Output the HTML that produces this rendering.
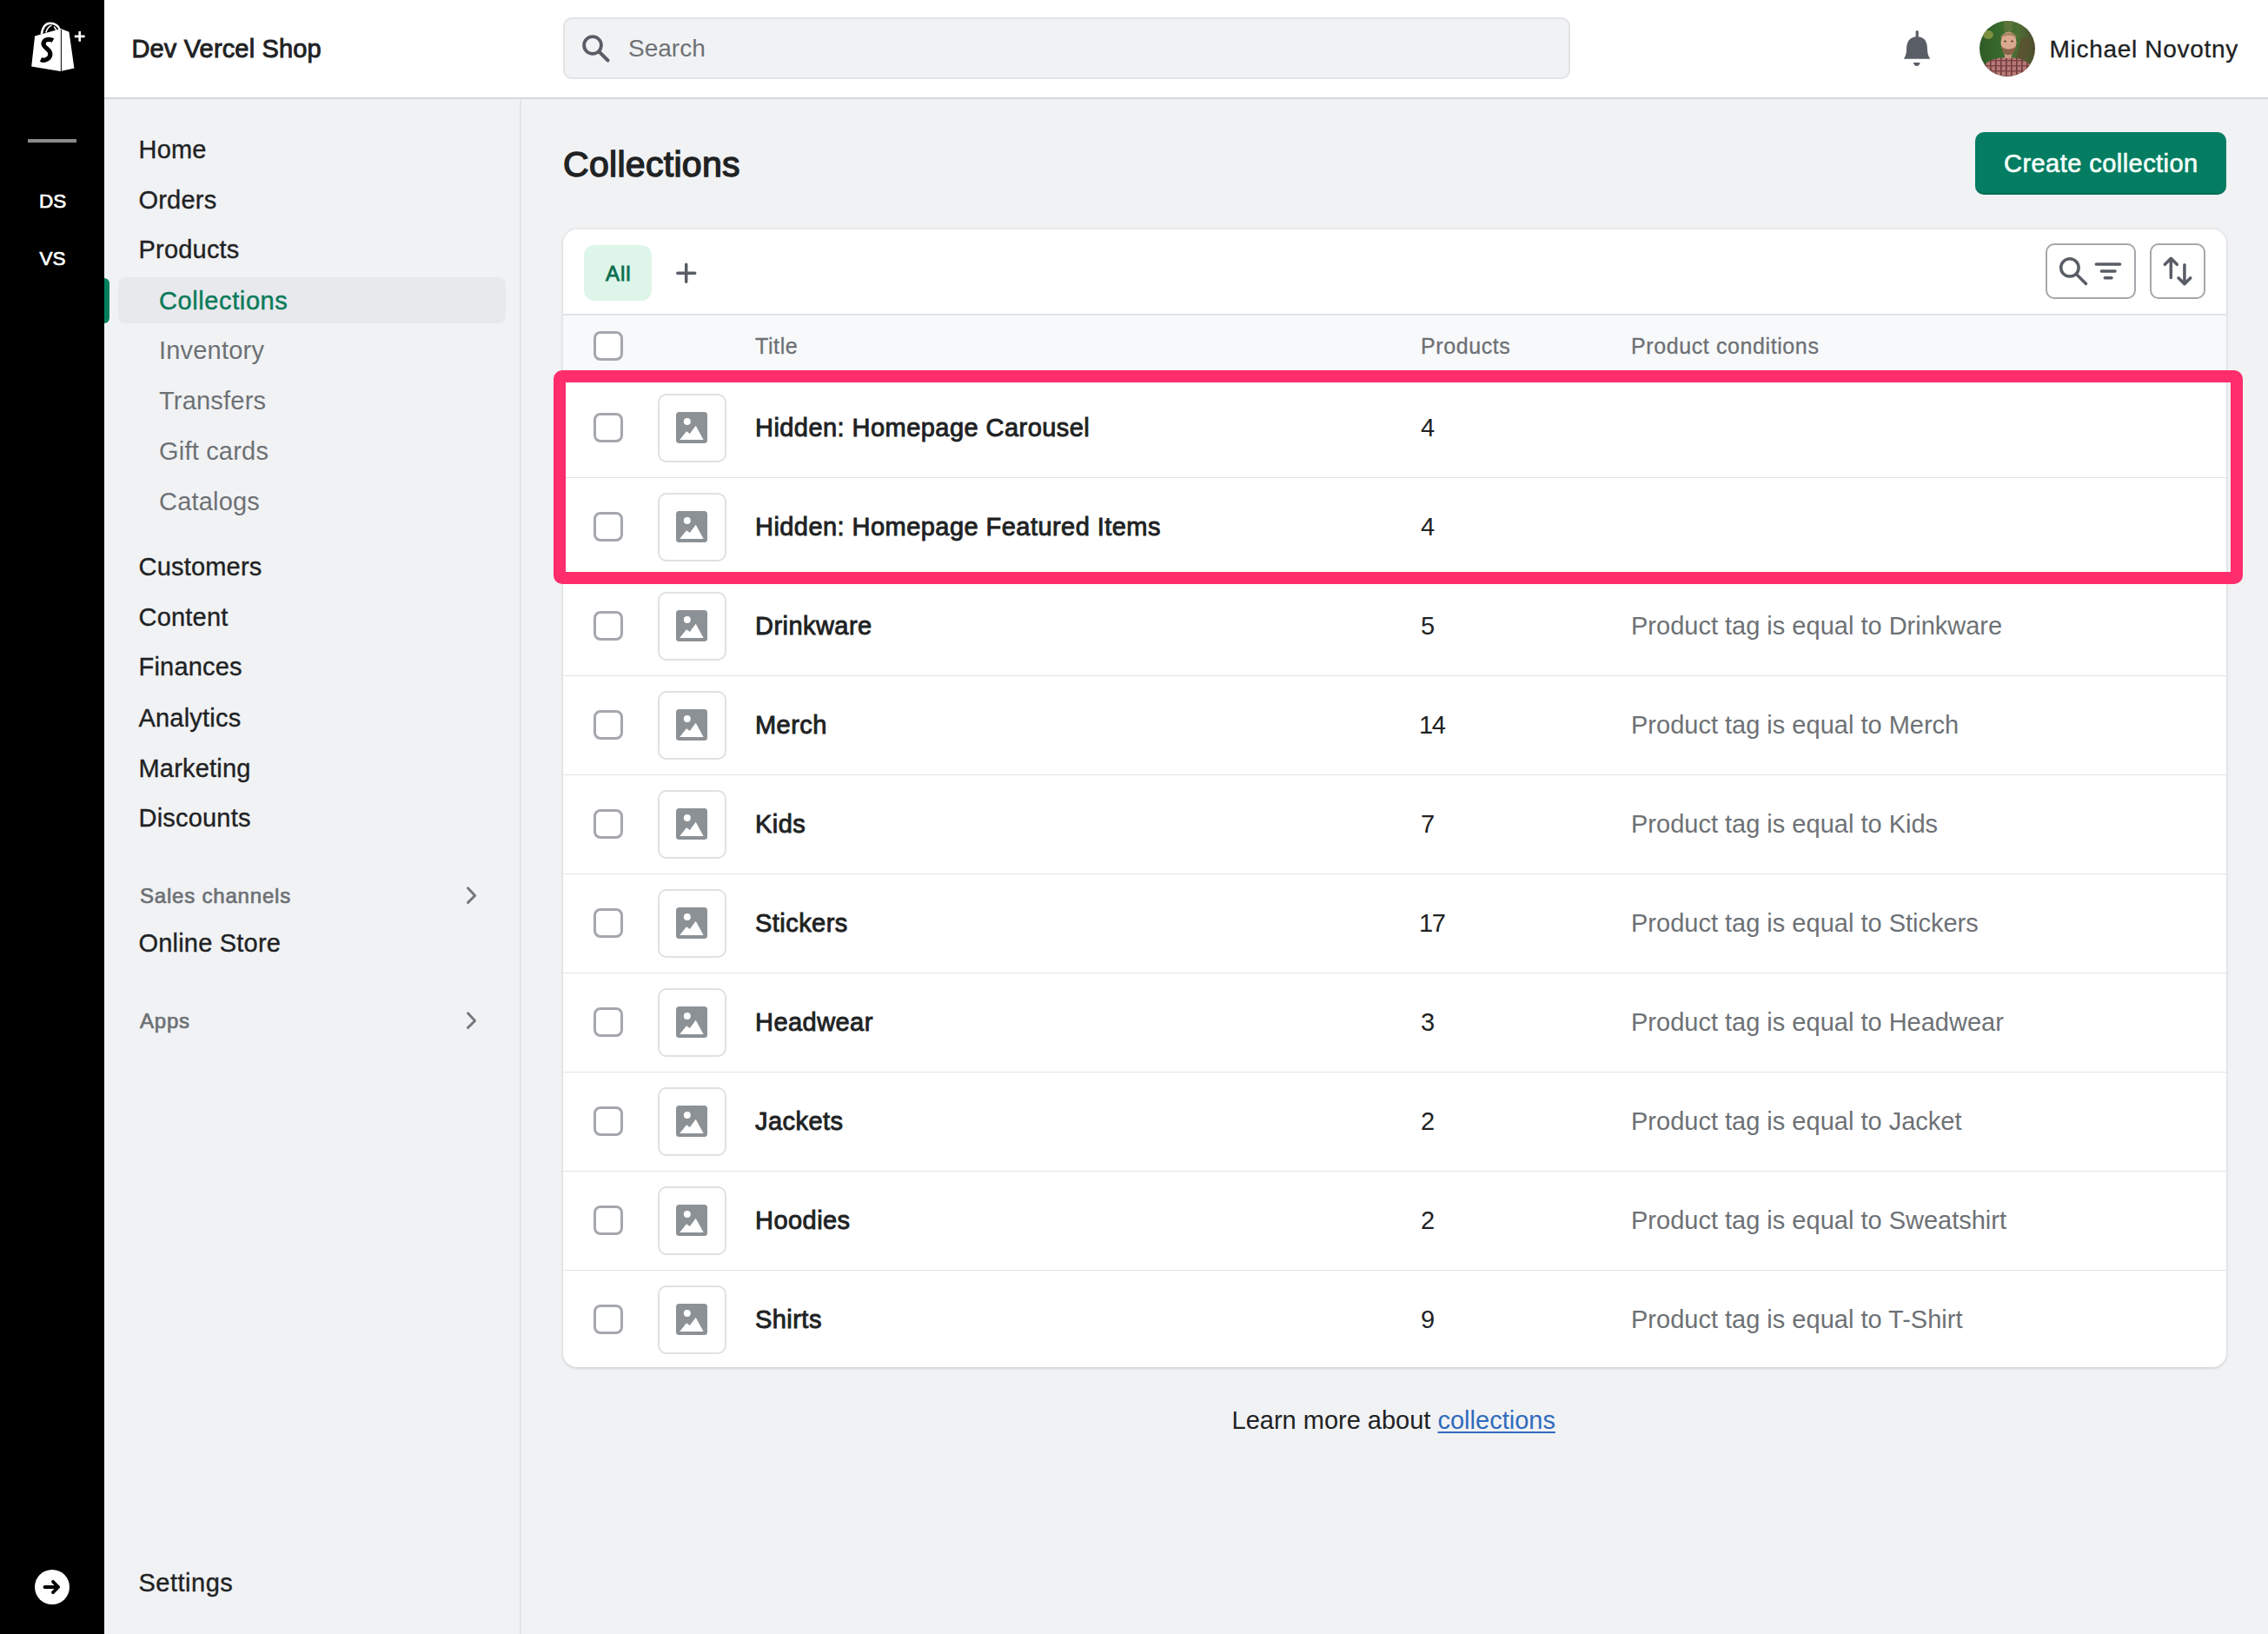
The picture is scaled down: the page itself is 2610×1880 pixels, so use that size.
<!DOCTYPE html>
<html><head><meta charset="utf-8"><style>
html,body{margin:0;padding:0}
body{width:2610px;height:1880px;position:relative;overflow:hidden;background:#f1f2f4;font-family:"Liberation Sans",sans-serif}
.t{position:absolute;white-space:nowrap}
</style></head><body>
<div style="position:absolute;left:0;top:0;width:120px;height:1880px;background:#000"></div>
<svg style="position:absolute;left:0;top:0" width="120" height="100" viewBox="0 0 120 100">
<path d="M40.1 41.4 L70 33.1 L79.5 36.8 L85.4 78.4 L69.5 82.1 L36.2 76.5 Z" fill="#fff"/>
<path d="M47.8 39.5 C49 31 53 26.8 58 26.8 C63 26.8 67 29.5 69 34.5" fill="none" stroke="#fff" stroke-width="2.6"/>
<path d="M52.8 37.5 C54.3 32.5 56.5 29.8 59.5 29.2" fill="none" stroke="#fff" stroke-width="1.6"/>
<path d="M62.2 30.6 L65.2 35" fill="none" stroke="#fff" stroke-width="1.5"/>
<line x1="70.4" y1="34" x2="70.4" y2="82" stroke="#000" stroke-width="1"/>
<path d="M61 46.6 C57.5 44.6 50.8 44.6 50 50 C49.3 54.3 56.3 56 57.6 60.6 C59 66.3 52.5 71.2 47 68.4" fill="none" stroke="#000" stroke-width="5.2"/>
<path d="M91.7 36 V47.8 M85.8 41.9 H97.6" stroke="#fff" stroke-width="2.6"/>
</svg>
<div style="position:absolute;left:32px;top:160px;width:56px;height:4px;background:#8a8a8a"></div>
<div class="t" style="left:45px;top:221.25px;font-size:22.5px;line-height:22.5px;color:#fff;font-weight:400;letter-spacing:0px;-webkit-text-stroke:0.7px #fff">DS</div>
<div class="t" style="left:45.5px;top:287.45px;font-size:22.5px;line-height:22.5px;color:#fff;font-weight:400;letter-spacing:0px;-webkit-text-stroke:0.7px #fff">VS</div>
<svg style="position:absolute;left:40px;top:1806px" width="40" height="40" viewBox="0 0 40 40">
<circle cx="20" cy="20" r="20" fill="#fff"/>
<path d="M11.5 20 H27 M21 13.8 L27.2 20 L21 26.2" fill="none" stroke="#000" stroke-width="3.8" stroke-linecap="round" stroke-linejoin="round"/>
</svg>
<div style="position:absolute;left:120px;top:0;width:2490px;height:112px;background:#fff;border-bottom:2px solid #d5d7da"></div>
<div class="t" style="left:151.5px;top:42.45px;font-size:29px;line-height:29px;color:#202223;font-weight:400;letter-spacing:0.15px;-webkit-text-stroke:0.9px #202223">Dev Vercel Shop</div>
<div style="position:absolute;left:648px;top:20px;width:1155px;height:67px;background:#f1f2f4;border:2px solid #e1e3e5;border-radius:10px"></div>
<svg style="position:absolute;left:660px;top:30px" width="50" height="50" viewBox="660 30 50 50">
<circle cx="682" cy="52" r="9.9" fill="none" stroke="#585d66" stroke-width="3.8"/>
<path d="M689.5 59.5 L699.5 69.5" stroke="#585d66" stroke-width="4" stroke-linecap="round"/>
</svg>
<div class="t" style="left:723px;top:42.30px;font-size:28px;line-height:28px;color:#6d7175;font-weight:400;letter-spacing:0px;">Search</div>
<svg style="position:absolute;left:2180px;top:30px" width="50" height="50" viewBox="2180 30 50 50">
<path d="M2206.2 36.5 V43" stroke="#585d66" stroke-width="3.2" stroke-linecap="round"/>
<path d="M2206.2 42.3 C2197 42.3 2194 49 2194 57 C2194 62 2192.5 65 2190.8 67.8 L2221.3 67.8 C2219.5 65 2218 62 2218 57 C2218 49 2215.5 42.3 2206.2 42.3 Z" fill="#585d66"/>
<path d="M2201.8 72 H2209.7 C2209 74.5 2207.5 75.9 2205.7 75.9 C2204 75.9 2202.5 74.5 2201.8 72 Z" fill="#585d66"/>
</svg>
<svg style="position:absolute;left:2278px;top:24px" width="64" height="64" viewBox="0 0 64 64">
<defs><clipPath id="av"><circle cx="32" cy="32" r="32"/></clipPath>
<linearGradient id="bgg" x1="0" y1="0" x2="1" y2="0"><stop offset="0" stop-color="#2f5a26"/><stop offset="0.45" stop-color="#3a6e2e"/><stop offset="0.7" stop-color="#4d6e34"/><stop offset="1" stop-color="#4e4a2e"/></linearGradient>
<pattern id="plaid" width="6" height="6" patternUnits="userSpaceOnUse"><rect width="6" height="6" fill="#b87878"/><rect x="0" y="0" width="1.6" height="6" fill="#6e3a3a"/><rect x="0" y="3" width="6" height="1.4" fill="#7a4444"/></pattern>
</defs>
<g clip-path="url(#av)">
<rect width="64" height="64" fill="url(#bgg)"/>
<ellipse cx="10" cy="16" rx="6" ry="5" fill="#9aa248" opacity="0.7"/>
<rect x="44" y="20" width="12" height="30" fill="#5c4e30" opacity="0.7" transform="rotate(15 50 35)"/>
<rect x="28" y="0" width="10" height="12" fill="#7b7a4a" opacity="0.5"/>
<path d="M0 64 C2 49 12 42.5 32 42 C52 42.5 62 49 64 64 Z" fill="url(#plaid)"/>
<path d="M28 36 L38 36 L36.5 43 L29.5 43 Z" fill="#c79a82"/>
<ellipse cx="33.5" cy="25" rx="9" ry="12.5" fill="#d9aa90"/>
<path d="M24.5 20 C25 12 42 11 42.5 20 C39 15.5 28 15.5 24.5 20 Z" fill="#a68660"/>
<path d="M25 28 C26 38 30 39 33.5 39 C37 39 41 38 42 28 C40 34 27 34 25 28 Z" fill="#8a6448"/>
<ellipse cx="29.5" cy="23.5" rx="1.4" ry="0.9" fill="#5a3a2a"/><ellipse cx="37.5" cy="23.5" rx="1.4" ry="0.9" fill="#5a3a2a"/>
</g></svg>
<div class="t" style="left:2358.5px;top:43.30px;font-size:28px;line-height:28px;color:#202223;font-weight:400;letter-spacing:0.7px;-webkit-text-stroke:0.3px #202223">Michael Novotny</div>
<div style="position:absolute;left:598px;top:113px;width:2px;height:1767px;background:#e3e4e6"></div>
<div style="position:absolute;left:136px;top:319px;width:446px;height:53px;background:#e8e9ed;border-radius:8px"></div>
<div style="position:absolute;left:120px;top:320px;width:6px;height:52px;background:#007f5f;border-radius:0 6px 6px 0"></div>
<div class="t" style="left:159.5px;top:157.95px;font-size:29px;line-height:29px;color:#202223;font-weight:400;letter-spacing:0.2px;-webkit-text-stroke:0.35px #202223">Home</div>
<div class="t" style="left:159.5px;top:215.95px;font-size:29px;line-height:29px;color:#202223;font-weight:400;letter-spacing:0.2px;-webkit-text-stroke:0.35px #202223">Orders</div>
<div class="t" style="left:159.5px;top:273.45px;font-size:29px;line-height:29px;color:#202223;font-weight:400;letter-spacing:0.2px;-webkit-text-stroke:0.35px #202223">Products</div>
<div class="t" style="left:183px;top:332.45px;font-size:29px;line-height:29px;color:#0b7a5a;font-weight:400;letter-spacing:0.6px;-webkit-text-stroke:0.45px #0b7a5a">Collections</div>
<div class="t" style="left:183px;top:389.45px;font-size:29px;line-height:29px;color:#6d7175;font-weight:400;letter-spacing:0.2px;">Inventory</div>
<div class="t" style="left:183px;top:447.45px;font-size:29px;line-height:29px;color:#6d7175;font-weight:400;letter-spacing:0.2px;">Transfers</div>
<div class="t" style="left:183px;top:505.45px;font-size:29px;line-height:29px;color:#6d7175;font-weight:400;letter-spacing:0.2px;">Gift cards</div>
<div class="t" style="left:183px;top:563.45px;font-size:29px;line-height:29px;color:#6d7175;font-weight:400;letter-spacing:0.2px;">Catalogs</div>
<div class="t" style="left:159.5px;top:637.95px;font-size:29px;line-height:29px;color:#202223;font-weight:400;letter-spacing:0.2px;-webkit-text-stroke:0.35px #202223">Customers</div>
<div class="t" style="left:159.5px;top:695.95px;font-size:29px;line-height:29px;color:#202223;font-weight:400;letter-spacing:0.2px;-webkit-text-stroke:0.35px #202223">Content</div>
<div class="t" style="left:159.5px;top:753.45px;font-size:29px;line-height:29px;color:#202223;font-weight:400;letter-spacing:0.2px;-webkit-text-stroke:0.35px #202223">Finances</div>
<div class="t" style="left:159.5px;top:811.95px;font-size:29px;line-height:29px;color:#202223;font-weight:400;letter-spacing:0.2px;-webkit-text-stroke:0.35px #202223">Analytics</div>
<div class="t" style="left:159.5px;top:869.95px;font-size:29px;line-height:29px;color:#202223;font-weight:400;letter-spacing:0.2px;-webkit-text-stroke:0.35px #202223">Marketing</div>
<div class="t" style="left:159.5px;top:927.45px;font-size:29px;line-height:29px;color:#202223;font-weight:400;letter-spacing:0.2px;-webkit-text-stroke:0.35px #202223">Discounts</div>
<div class="t" style="left:161px;top:1018.68px;font-size:24px;line-height:24px;color:#6d7175;font-weight:400;letter-spacing:0.8px;-webkit-text-stroke:0.7px #6d7175">Sales channels</div>
<div class="t" style="left:159.5px;top:1071.45px;font-size:29px;line-height:29px;color:#202223;font-weight:400;letter-spacing:0.2px;-webkit-text-stroke:0.35px #202223">Online Store</div>
<div class="t" style="left:161px;top:1163.18px;font-size:24px;line-height:24px;color:#6d7175;font-weight:400;letter-spacing:0.8px;-webkit-text-stroke:0.7px #6d7175">Apps</div>
<svg style="position:absolute;left:530px;top:1016px" width="26" height="28" viewBox="0 0 26 28"><path d="M8.5 5.7 L16.6 14.5 L8.5 22.4" fill="none" stroke="#74787e" stroke-width="2.9" stroke-linecap="round" stroke-linejoin="round"/></svg>
<svg style="position:absolute;left:530px;top:1160px" width="26" height="28" viewBox="0 0 26 28"><path d="M8.5 5.7 L16.6 14.5 L8.5 22.4" fill="none" stroke="#74787e" stroke-width="2.9" stroke-linecap="round" stroke-linejoin="round"/></svg>
<div class="t" style="left:159.5px;top:1807.45px;font-size:29px;line-height:29px;color:#202223;font-weight:400;letter-spacing:0.5px;-webkit-text-stroke:0.35px #202223">Settings</div>
<div class="t" style="left:648px;top:169.29px;font-size:41px;line-height:41px;color:#202223;font-weight:400;letter-spacing:0.3px;-webkit-text-stroke:1.4px #202223">Collections</div>
<div style="position:absolute;left:2273px;top:152px;width:289px;height:72px;background:#047d62;border-radius:10px;box-shadow:inset 0 -2px 0 rgba(0,0,0,0.12)"></div>
<div class="t" style="left:2306px;top:174.45px;font-size:29px;line-height:29px;color:#f4fffb;font-weight:400;letter-spacing:0.45px;-webkit-text-stroke:0.65px #f4fffb">Create collection</div>
<div style="position:absolute;left:648px;top:264px;width:1914px;height:1309px;background:#fff;border-radius:16px;box-shadow:0 0 4px rgba(0,0,0,0.10),0 2px 3px rgba(0,0,0,0.08);overflow:hidden"><div style="position:absolute;left:0;top:97px;width:100%;height:2px;background:#e1e3e5"></div><div style="position:absolute;left:0;top:99px;width:100%;height:72px;background:#f8f9fa"></div></div>
<div style="position:absolute;left:672px;top:282px;width:78px;height:64px;background:#def5e9;border-radius:12px"></div>
<div class="t" style="left:697px;top:302.68px;font-size:24px;line-height:24px;color:#0b6e4f;font-weight:400;letter-spacing:1px;-webkit-text-stroke:0.8px #0b6e4f">All</div>
<svg style="position:absolute;left:770px;top:295px" width="40" height="40" viewBox="770 295 40 40"><path d="M789.7 304.2 V324.3 M779.8 314.2 H799.7" stroke="#585d66" stroke-width="3.5" stroke-linecap="round"/></svg>
<div style="position:absolute;left:2354px;top:280px;width:100px;height:60px;border:2px solid #a4a7ab;border-radius:10px;background:#fff"></div>
<div style="position:absolute;left:2474px;top:280px;width:60px;height:60px;border:2px solid #a4a7ab;border-radius:10px;background:#fff"></div>
<svg style="position:absolute;left:2354px;top:280px" width="184" height="64" viewBox="2354 280 184 64">
<g stroke="#585d66" stroke-width="3.5" stroke-linecap="round" fill="none" stroke-linejoin="round">
<circle cx="2381.9" cy="307.9" r="10.2"/>
<path d="M2389.5 315.5 L2400.5 326.5"/>
<path d="M2412.3 304 H2439.6 M2418.4 312 H2434 M2422.3 319.8 H2430"/>
<path d="M2498.3 297.5 V319.4 M2491.3 304.3 L2498.3 297.3 L2505.3 304.3"/>
<path d="M2513.9 304.8 V326.5 M2507 319.8 L2513.9 326.7 L2520.8 319.8"/>
</g></svg>
<div style="position:absolute;left:682.5px;top:380.5px;width:28px;height:28px;border:3.5px solid #a4a7ad;border-radius:8px;background:#fff"></div>
<div class="t" style="left:869px;top:385.84px;font-size:25px;line-height:25px;color:#6d7175;font-weight:400;letter-spacing:0.6px;-webkit-text-stroke:0.3px #6d7175">Title</div>
<div class="t" style="left:1635px;top:385.84px;font-size:25px;line-height:25px;color:#6d7175;font-weight:400;letter-spacing:0.6px;-webkit-text-stroke:0.3px #6d7175">Products</div>
<div class="t" style="left:1877px;top:385.84px;font-size:25px;line-height:25px;color:#6d7175;font-weight:400;letter-spacing:0.6px;-webkit-text-stroke:0.3px #6d7175">Product conditions</div>
<div style="position:absolute;left:648px;top:435px;width:1914px;height:1px;background:#e1e3e5"></div>
<div style="position:absolute;left:682.5px;top:474.5px;width:28px;height:28px;border:3.5px solid #a4a7ad;border-radius:8px;background:#fff"></div>
<div style="position:absolute;left:757px;top:452.5px;width:75px;height:75px;border:2px solid #dfe1e4;border-radius:10px;background:#fff"></div>
<svg style="position:absolute;left:778px;top:474px" width="36" height="36" viewBox="0 0 36 36">
<rect x="0" y="0" width="36" height="36" rx="3.5" fill="#8c9196"/>
<circle cx="12.8" cy="11" r="4" fill="#fff"/>
<path d="M4.2 32 L12 22.2 L15.8 25 L22.7 15.8 L31.6 32 Z" fill="#fff"/>
</svg>
<div class="t" style="left:869px;top:477.95px;font-size:29px;line-height:29px;color:#202223;font-weight:400;letter-spacing:0.45px;-webkit-text-stroke:0.9px #202223">Hidden: Homepage Carousel</div>
<div class="t" style="left:1635px;top:477.95px;font-size:29px;line-height:29px;color:#202223;font-weight:400;letter-spacing:0px;">4</div>
<div style="position:absolute;left:648px;top:549px;width:1914px;height:1px;background:#e1e3e5"></div>
<div style="position:absolute;left:682.5px;top:588.5px;width:28px;height:28px;border:3.5px solid #a4a7ad;border-radius:8px;background:#fff"></div>
<div style="position:absolute;left:757px;top:566.5px;width:75px;height:75px;border:2px solid #dfe1e4;border-radius:10px;background:#fff"></div>
<svg style="position:absolute;left:778px;top:588px" width="36" height="36" viewBox="0 0 36 36">
<rect x="0" y="0" width="36" height="36" rx="3.5" fill="#8c9196"/>
<circle cx="12.8" cy="11" r="4" fill="#fff"/>
<path d="M4.2 32 L12 22.2 L15.8 25 L22.7 15.8 L31.6 32 Z" fill="#fff"/>
</svg>
<div class="t" style="left:869px;top:591.95px;font-size:29px;line-height:29px;color:#202223;font-weight:400;letter-spacing:0.45px;-webkit-text-stroke:0.9px #202223">Hidden: Homepage Featured Items</div>
<div class="t" style="left:1635px;top:591.95px;font-size:29px;line-height:29px;color:#202223;font-weight:400;letter-spacing:0px;">4</div>
<div style="position:absolute;left:648px;top:663px;width:1914px;height:1px;background:#e1e3e5"></div>
<div style="position:absolute;left:682.5px;top:702.5px;width:28px;height:28px;border:3.5px solid #a4a7ad;border-radius:8px;background:#fff"></div>
<div style="position:absolute;left:757px;top:680.5px;width:75px;height:75px;border:2px solid #dfe1e4;border-radius:10px;background:#fff"></div>
<svg style="position:absolute;left:778px;top:702px" width="36" height="36" viewBox="0 0 36 36">
<rect x="0" y="0" width="36" height="36" rx="3.5" fill="#8c9196"/>
<circle cx="12.8" cy="11" r="4" fill="#fff"/>
<path d="M4.2 32 L12 22.2 L15.8 25 L22.7 15.8 L31.6 32 Z" fill="#fff"/>
</svg>
<div class="t" style="left:869px;top:705.95px;font-size:29px;line-height:29px;color:#202223;font-weight:400;letter-spacing:0.45px;-webkit-text-stroke:0.9px #202223">Drinkware</div>
<div class="t" style="left:1635px;top:705.95px;font-size:29px;line-height:29px;color:#202223;font-weight:400;letter-spacing:0px;">5</div>
<div class="t" style="left:1877px;top:705.95px;font-size:29px;line-height:29px;color:#6d7175;font-weight:400;letter-spacing:0px;">Product tag is equal to Drinkware</div>
<div style="position:absolute;left:648px;top:777px;width:1914px;height:1px;background:#e1e3e5"></div>
<div style="position:absolute;left:682.5px;top:816.5px;width:28px;height:28px;border:3.5px solid #a4a7ad;border-radius:8px;background:#fff"></div>
<div style="position:absolute;left:757px;top:794.5px;width:75px;height:75px;border:2px solid #dfe1e4;border-radius:10px;background:#fff"></div>
<svg style="position:absolute;left:778px;top:816px" width="36" height="36" viewBox="0 0 36 36">
<rect x="0" y="0" width="36" height="36" rx="3.5" fill="#8c9196"/>
<circle cx="12.8" cy="11" r="4" fill="#fff"/>
<path d="M4.2 32 L12 22.2 L15.8 25 L22.7 15.8 L31.6 32 Z" fill="#fff"/>
</svg>
<div class="t" style="left:869px;top:819.95px;font-size:29px;line-height:29px;color:#202223;font-weight:400;letter-spacing:0.45px;-webkit-text-stroke:0.9px #202223">Merch</div>
<div class="t" style="left:1633px;top:819.95px;font-size:29px;line-height:29px;color:#202223;font-weight:400;letter-spacing:-1.5px;">14</div>
<div class="t" style="left:1877px;top:819.95px;font-size:29px;line-height:29px;color:#6d7175;font-weight:400;letter-spacing:0px;">Product tag is equal to Merch</div>
<div style="position:absolute;left:648px;top:891px;width:1914px;height:1px;background:#e1e3e5"></div>
<div style="position:absolute;left:682.5px;top:930.5px;width:28px;height:28px;border:3.5px solid #a4a7ad;border-radius:8px;background:#fff"></div>
<div style="position:absolute;left:757px;top:908.5px;width:75px;height:75px;border:2px solid #dfe1e4;border-radius:10px;background:#fff"></div>
<svg style="position:absolute;left:778px;top:930px" width="36" height="36" viewBox="0 0 36 36">
<rect x="0" y="0" width="36" height="36" rx="3.5" fill="#8c9196"/>
<circle cx="12.8" cy="11" r="4" fill="#fff"/>
<path d="M4.2 32 L12 22.2 L15.8 25 L22.7 15.8 L31.6 32 Z" fill="#fff"/>
</svg>
<div class="t" style="left:869px;top:933.95px;font-size:29px;line-height:29px;color:#202223;font-weight:400;letter-spacing:0.45px;-webkit-text-stroke:0.9px #202223">Kids</div>
<div class="t" style="left:1635px;top:933.95px;font-size:29px;line-height:29px;color:#202223;font-weight:400;letter-spacing:0px;">7</div>
<div class="t" style="left:1877px;top:933.95px;font-size:29px;line-height:29px;color:#6d7175;font-weight:400;letter-spacing:0px;">Product tag is equal to Kids</div>
<div style="position:absolute;left:648px;top:1005px;width:1914px;height:1px;background:#e1e3e5"></div>
<div style="position:absolute;left:682.5px;top:1044.5px;width:28px;height:28px;border:3.5px solid #a4a7ad;border-radius:8px;background:#fff"></div>
<div style="position:absolute;left:757px;top:1022.5px;width:75px;height:75px;border:2px solid #dfe1e4;border-radius:10px;background:#fff"></div>
<svg style="position:absolute;left:778px;top:1044px" width="36" height="36" viewBox="0 0 36 36">
<rect x="0" y="0" width="36" height="36" rx="3.5" fill="#8c9196"/>
<circle cx="12.8" cy="11" r="4" fill="#fff"/>
<path d="M4.2 32 L12 22.2 L15.8 25 L22.7 15.8 L31.6 32 Z" fill="#fff"/>
</svg>
<div class="t" style="left:869px;top:1047.95px;font-size:29px;line-height:29px;color:#202223;font-weight:400;letter-spacing:0.45px;-webkit-text-stroke:0.9px #202223">Stickers</div>
<div class="t" style="left:1633px;top:1047.95px;font-size:29px;line-height:29px;color:#202223;font-weight:400;letter-spacing:-1.5px;">17</div>
<div class="t" style="left:1877px;top:1047.95px;font-size:29px;line-height:29px;color:#6d7175;font-weight:400;letter-spacing:0px;">Product tag is equal to Stickers</div>
<div style="position:absolute;left:648px;top:1119px;width:1914px;height:1px;background:#e1e3e5"></div>
<div style="position:absolute;left:682.5px;top:1158.5px;width:28px;height:28px;border:3.5px solid #a4a7ad;border-radius:8px;background:#fff"></div>
<div style="position:absolute;left:757px;top:1136.5px;width:75px;height:75px;border:2px solid #dfe1e4;border-radius:10px;background:#fff"></div>
<svg style="position:absolute;left:778px;top:1158px" width="36" height="36" viewBox="0 0 36 36">
<rect x="0" y="0" width="36" height="36" rx="3.5" fill="#8c9196"/>
<circle cx="12.8" cy="11" r="4" fill="#fff"/>
<path d="M4.2 32 L12 22.2 L15.8 25 L22.7 15.8 L31.6 32 Z" fill="#fff"/>
</svg>
<div class="t" style="left:869px;top:1161.95px;font-size:29px;line-height:29px;color:#202223;font-weight:400;letter-spacing:0.45px;-webkit-text-stroke:0.9px #202223">Headwear</div>
<div class="t" style="left:1635px;top:1161.95px;font-size:29px;line-height:29px;color:#202223;font-weight:400;letter-spacing:0px;">3</div>
<div class="t" style="left:1877px;top:1161.95px;font-size:29px;line-height:29px;color:#6d7175;font-weight:400;letter-spacing:0px;">Product tag is equal to Headwear</div>
<div style="position:absolute;left:648px;top:1233px;width:1914px;height:1px;background:#e1e3e5"></div>
<div style="position:absolute;left:682.5px;top:1272.5px;width:28px;height:28px;border:3.5px solid #a4a7ad;border-radius:8px;background:#fff"></div>
<div style="position:absolute;left:757px;top:1250.5px;width:75px;height:75px;border:2px solid #dfe1e4;border-radius:10px;background:#fff"></div>
<svg style="position:absolute;left:778px;top:1272px" width="36" height="36" viewBox="0 0 36 36">
<rect x="0" y="0" width="36" height="36" rx="3.5" fill="#8c9196"/>
<circle cx="12.8" cy="11" r="4" fill="#fff"/>
<path d="M4.2 32 L12 22.2 L15.8 25 L22.7 15.8 L31.6 32 Z" fill="#fff"/>
</svg>
<div class="t" style="left:869px;top:1275.95px;font-size:29px;line-height:29px;color:#202223;font-weight:400;letter-spacing:0.45px;-webkit-text-stroke:0.9px #202223">Jackets</div>
<div class="t" style="left:1635px;top:1275.95px;font-size:29px;line-height:29px;color:#202223;font-weight:400;letter-spacing:0px;">2</div>
<div class="t" style="left:1877px;top:1275.95px;font-size:29px;line-height:29px;color:#6d7175;font-weight:400;letter-spacing:0px;">Product tag is equal to Jacket</div>
<div style="position:absolute;left:648px;top:1347px;width:1914px;height:1px;background:#e1e3e5"></div>
<div style="position:absolute;left:682.5px;top:1386.5px;width:28px;height:28px;border:3.5px solid #a4a7ad;border-radius:8px;background:#fff"></div>
<div style="position:absolute;left:757px;top:1364.5px;width:75px;height:75px;border:2px solid #dfe1e4;border-radius:10px;background:#fff"></div>
<svg style="position:absolute;left:778px;top:1386px" width="36" height="36" viewBox="0 0 36 36">
<rect x="0" y="0" width="36" height="36" rx="3.5" fill="#8c9196"/>
<circle cx="12.8" cy="11" r="4" fill="#fff"/>
<path d="M4.2 32 L12 22.2 L15.8 25 L22.7 15.8 L31.6 32 Z" fill="#fff"/>
</svg>
<div class="t" style="left:869px;top:1389.95px;font-size:29px;line-height:29px;color:#202223;font-weight:400;letter-spacing:0.45px;-webkit-text-stroke:0.9px #202223">Hoodies</div>
<div class="t" style="left:1635px;top:1389.95px;font-size:29px;line-height:29px;color:#202223;font-weight:400;letter-spacing:0px;">2</div>
<div class="t" style="left:1877px;top:1389.95px;font-size:29px;line-height:29px;color:#6d7175;font-weight:400;letter-spacing:0px;">Product tag is equal to Sweatshirt</div>
<div style="position:absolute;left:648px;top:1461px;width:1914px;height:1px;background:#e1e3e5"></div>
<div style="position:absolute;left:682.5px;top:1500.5px;width:28px;height:28px;border:3.5px solid #a4a7ad;border-radius:8px;background:#fff"></div>
<div style="position:absolute;left:757px;top:1478.5px;width:75px;height:75px;border:2px solid #dfe1e4;border-radius:10px;background:#fff"></div>
<svg style="position:absolute;left:778px;top:1500px" width="36" height="36" viewBox="0 0 36 36">
<rect x="0" y="0" width="36" height="36" rx="3.5" fill="#8c9196"/>
<circle cx="12.8" cy="11" r="4" fill="#fff"/>
<path d="M4.2 32 L12 22.2 L15.8 25 L22.7 15.8 L31.6 32 Z" fill="#fff"/>
</svg>
<div class="t" style="left:869px;top:1503.95px;font-size:29px;line-height:29px;color:#202223;font-weight:400;letter-spacing:0.45px;-webkit-text-stroke:0.9px #202223">Shirts</div>
<div class="t" style="left:1635px;top:1503.95px;font-size:29px;line-height:29px;color:#202223;font-weight:400;letter-spacing:0px;">9</div>
<div class="t" style="left:1877px;top:1503.95px;font-size:29px;line-height:29px;color:#6d7175;font-weight:400;letter-spacing:0px;">Product tag is equal to T-Shirt</div>
<div style="position:absolute;left:637px;top:426px;width:1916px;height:218px;border:14px solid #ff2d6b;border-radius:10px"></div>
<div class="t" style="left:1417.5px;top:1620.45px;font-size:29px;line-height:29px;color:#202223;font-weight:400;letter-spacing:0px;">Learn more about <span style="color:#2f6bbd;text-decoration:underline;text-underline-offset:3px;text-decoration-thickness:2px">collections</span></div>
</body></html>
